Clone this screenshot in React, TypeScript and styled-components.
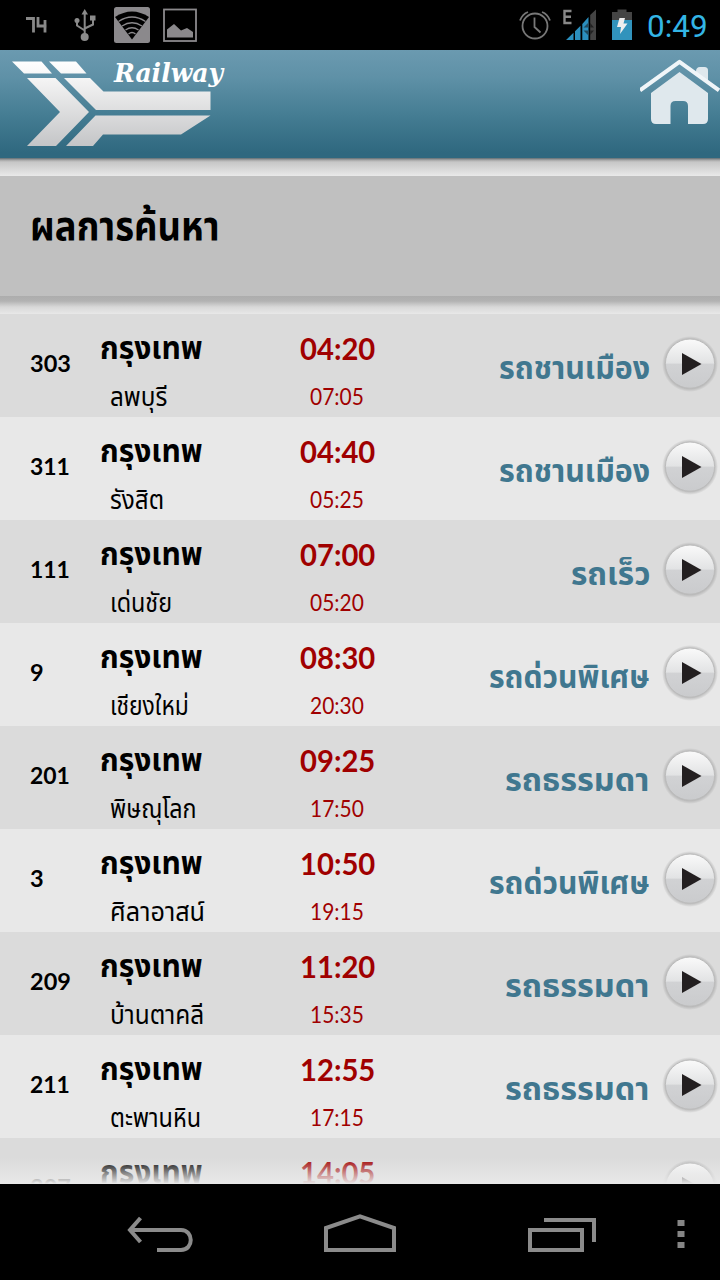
import React, { useLayoutEffect, useRef, useState } from "react";
import styled, { createGlobalStyle } from "styled-components";

const GlobalStyle = createGlobalStyle`
  * { box-sizing: border-box; }
  html, body { margin: 0; padding: 0; background: #000; }
`;

const LATIN = `Lato, "Noto Sans Thai", "Noto Sans", sans-serif`;
const THAI = `"Noto Sans Thai", "Noto Sans", "DejaVu Sans", sans-serif`;

const Screen = styled.div`
  display: flex;
  flex-direction: column;
  width: 720px;
  height: 1280px;
  overflow: hidden;
  background: #000;
  font-family: ${LATIN};
`;

const StatusBar = styled.div`
  display: flex;
  justify-content: space-between;
  flex: none;
  height: 50px;
  background: #000;
`;

const Clock = styled.div`
  width: 73px;
  font: 400 32px/52px Roboto, sans-serif;
  color: #33b5e5;
  white-space: nowrap;
`;

const StatusRight = styled.div`
  display: flex;
`;

const Header = styled.header`
  display: flex;
  justify-content: space-between;
  flex: none;
  height: 108px;
  background: linear-gradient(#6b9ab0, #5f91a7 25%, #457d93 60%, #2f687f 95%, #2f687f);
`;

const Brand = styled.div`
  display: flex;
  padding-left: 12px;
`;

const HeaderLip = styled.div`
  flex: none;
  height: 18px;
  background: linear-gradient(#5f6d73, #a5a5a5 2px, #c6c6c6 4px, #e9e9e9);
`;

const TitleBar = styled.div`
  flex: none;
  height: 120px;
  padding: 26px 0 0 30px;
  background: #c0c0c0;
`;

const TitleLip = styled.div`
  flex: none;
  height: 18px;
  background: linear-gradient(#adadad, #b2b2b2 5px, #d8d8d8 11px, #e8e8e8);
`;

const List = styled.div`
  position: relative;
  flex: none;
  height: 870px;
  overflow: hidden;
`;

const Fade = styled.div`
  position: absolute;
  left: 0;
  right: 0;
  bottom: 0;
  height: 26px;
  background: linear-gradient(rgba(232, 232, 232, 0), #e8e8e8);
`;

const Row = styled.div<{ $alt: boolean }>`
  display: flex;
  height: 103px;
  padding-left: 30px;
  background: ${(p) => (p.$alt ? "#e8e8e8" : "#dbdbdb")};
`;

const NumberCell = styled.div`
  width: 70px;
  padding-top: 34px;
`;

const StationCell = styled.div`
  width: 200px;
  padding-top: 11px;
`;

const TimeCell = styled.div`
  width: 120px;
  padding-top: 13px;
`;

const TypeCell = styled.div`
  display: flex;
  flex: 1;
  justify-content: flex-end;
  padding: 32px 10px 0 0;
`;

const PlayCell = styled.div`
  width: 60px;
  padding-top: 18px;
`;

const Second = styled.div`
  padding-left: 10px;
`;

const Label = styled.div<{
  $size: number;
  $line: number;
  $weight?: number;
  $color?: string;
  $thai?: boolean;
}>`
  font-family: ${(p) => (p.$thai ? THAI : LATIN)};
  font-size: ${(p) => p.$size}px;
  line-height: ${(p) => p.$line}px;
  height: ${(p) => p.$line}px;
  font-weight: ${(p) => p.$weight ?? 400};
  color: ${(p) => p.$color ?? "#000"};
  white-space: nowrap;
`;

const Stretch = styled.span`
  display: inline-block;
  transform-origin: 0 50%;
`;

const NavBar = styled.nav`
  display: flex;
  flex: none;
  height: 96px;
  background: #000;
`;

/** Keeps a run of text at a set width, whatever the advance widths of the font. */
function Fit({ width, children }: { width: number; children: string }) {
  const ref = useRef<HTMLSpanElement>(null);
  const [scale, setScale] = useState(1);
  useLayoutEffect(() => {
    const w = ref.current?.offsetWidth;
    if (w) setScale(width / w);
  }, [width, children]);
  return (
    <div style={{ width }}>
      <Stretch ref={ref} style={{ transform: `scaleX(${scale})` }}>
        {children}
      </Stretch>
    </div>
  );
}

type Train = {
  no: string;
  noW: number;
  to?: string;
  toW?: number;
  dep: string;
  arr?: string;
  type?: string;
  typeW?: number;
};

const TRAINS: Train[] = [
  { no: "303", noW: 41, to: "ลพบุรี", toW: 57, dep: "04:20", arr: "07:05", type: "รถชานเมือง", typeW: 151 },
  { no: "311", noW: 40, to: "รังสิต", toW: 54, dep: "04:40", arr: "05:25", type: "รถชานเมือง", typeW: 151 },
  { no: "111", noW: 40, to: "เด่นชัย", toW: 62, dep: "07:00", arr: "05:20", type: "รถเร็ว", typeW: 79 },
  { no: "9", noW: 14, to: "เชียงใหม่", toW: 79, dep: "08:30", arr: "20:30", type: "รถด่วนพิเศษ", typeW: 161 },
  { no: "201", noW: 40, to: "พิษณุโลก", toW: 87, dep: "09:25", arr: "17:50", type: "รถธรรมดา", typeW: 145 },
  { no: "3", noW: 14, to: "ศิลาอาสน์", toW: 95, dep: "10:50", arr: "19:15", type: "รถด่วนพิเศษ", typeW: 161 },
  { no: "209", noW: 41, to: "บ้านตาคลี", toW: 94, dep: "11:20", arr: "15:35", type: "รถธรรมดา", typeW: 145 },
  { no: "211", noW: 40, to: "ตะพานหิน", toW: 91, dep: "12:55", arr: "17:15", type: "รถธรรมดา", typeW: 145 },
  { no: "207", noW: 41, dep: "14:05" },
];

const PlayButton = () => (
  <svg width="60" height="64" viewBox="660 332 60 64" style={{ display: "block" }}>
    <defs>
      <linearGradient id="ball" x1="0" y1="0" x2="0" y2="1">
        <stop offset="0" stopColor="#fafafa" />
        <stop offset="0.49" stopColor="#e2e3e4" />
        <stop offset="0.51" stopColor="#d1d2d4" />
        <stop offset="1" stopColor="#cacbcd" />
      </linearGradient>
      <radialGradient id="halo">
        <stop offset="0.86" stopColor="#999" stopOpacity="0.6" />
        <stop offset="1" stopColor="#999" stopOpacity="0" />
      </radialGradient>
    </defs>
    <circle cx="690" cy="364" r="28" fill="url(#halo)" />
    <circle cx="690" cy="363.6" r="24.6" fill="url(#ball)" stroke="#bcbcbc" strokeWidth="1" />
    <path d="M682 353 L701.5 364 L682 375Z" fill="#231f20" />
  </svg>
);

function TrainRow({ train, alt }: { train: Train; alt: boolean }) {
  return (
    <Row $alt={alt}>
      <NumberCell>
        <Label $size={23.5} $line={30} $weight={700}><Fit width={train.noW}>{train.no}</Fit></Label>
      </NumberCell>
      <StationCell>
        <Label $size={32} $line={48} $weight={700} $thai><Fit width={103}>กรุงเทพ</Fit></Label>
        {train.to && (
          <Second>
            <Label $size={26} $line={50} $thai><Fit width={train.toW ?? 0}>{train.to}</Fit></Label>
          </Second>
        )}
      </StationCell>
      <TimeCell>
        <Label $size={30} $line={42} $weight={700} $color="#a00000"><Fit width={75}>{train.dep}</Fit></Label>
        {train.arr && (
          <Second>
            <Label $size={22.5} $line={55} $color="#a00000"><Fit width={54}>{train.arr}</Fit></Label>
          </Second>
        )}
      </TimeCell>
      <TypeCell>
        {train.type && (
          <Label $size={32} $line={46} $weight={700} $color="#40778f" $thai>
            <Fit width={train.typeW ?? 0}>{train.type}</Fit>
          </Label>
        )}
      </TypeCell>
      <PlayCell><PlayButton /></PlayCell>
    </Row>
  );
}

const Notifications = () => (
  <svg width="220" height="50" viewBox="0 0 220 50">
    <g fill="none" stroke="#888" strokeWidth="2.8">
      <path d="M26 18.5H33.5V32.5M38 17V26H46.5M45 20V32.5" />
      <path d="M84.7 12V37M77 21V25.5L84.7 30.5M93 19V24.5L84.7 28.5" strokeWidth="2" />
      <rect x="164" y="9.5" width="32" height="31.5" strokeWidth="1.8" stroke="#8b898c" />
    </g>
    <g fill="#8b8b8b">
      <path d="M81.5 14.5L84.7 9L88 14.5Z" />
      <circle cx="77" cy="20.5" r="2.5" />
      <rect x="90" y="15.5" width="5.5" height="5" />
      <circle cx="84.7" cy="37" r="4" />
      <rect x="114" y="7" width="36" height="36" rx="2.5" fill="#8b898c" />
      <path d="M167 37V29.5L174 24L181 30.5L187 28L193 32V37.5H167Z" fill="#8b898c" />
    </g>
    <path d="M115 17Q132 6 149 17L132 39.5Z" fill="#000" />
    <g fill="none" stroke="#8b898c" strokeWidth="1.3">
      <path d="M118.5 21.5Q132 12.5 145.5 21.5" />
      <path d="M122 26Q132 19.5 142 26" />
      <path d="M125.5 30Q132 25.5 138.5 30" />
      <path d="M128.5 34Q132 31 135.5 34" />
    </g>
  </svg>
);

const SystemStatus = () => (
  <svg width="147" height="50" viewBox="500 0 147 50">
    <g fill="none" stroke="#777" strokeWidth="1.8">
      <circle cx="535" cy="26" r="12.5" />
      <path d="M534.5 17.5V27L540.5 32.5" />
      <path d="M520 20.5Q522.5 14 528 12M550 20.5Q547.5 14 542 12" />
      <path d="M571.5 11H564.5V23H571.5M564.5 16.8H571" stroke="#888" strokeWidth="2.4" />
    </g>
    <path d="M566 40L573.5 32.7V40ZM575 31.2L580.5 25.7V40H575ZM582.3 24L588.5 17V40H582.3Z" fill="#2b8fbe" />
    <path d="M590.2 15L596 9.5V40H590.2Z" fill="#444" />
    <path d="M589 22L583.5 27.5H589ZM589 36L583.5 30.5H589Z" fill="#204b60" />
    <path d="M590.2 23L594 27.5H590.2ZM590.2 35L594 30.5H590.2Z" fill="#222" />
    <path d="M612 12H617.5V9.5H626.5V12H632V20H612Z" fill="#444" />
    <rect x="612" y="20" width="20" height="20" fill="#3193bc" />
    <path d="M619.5 18H625L623.5 23.5H627.5L620 34L621 27H617Z" fill="#eee" />
  </svg>
);

const RailwayLogo = () => (
  <svg width="218" height="108" viewBox="12 50 218 108">
    <defs>
      <linearGradient id="metal" gradientUnits="userSpaceOnUse" x1="0" y1="61" x2="0" y2="146">
        <stop offset="0" stopColor="#fff" />
        <stop offset="0.25" stopColor="#f2f2f2" />
        <stop offset="1" stopColor="#c4c5c7" />
      </linearGradient>
    </defs>
    <g fill="url(#metal)">
      <path d="M12 61.5H41.5L52 73.5H24Z" />
      <path d="M49 61.5H76L86.5 73.5H61Z" />
      <path d="M27 78H55.5L89 112L56 146H27L60 112Z" />
      <path d="M64 78H90L103.5 91.5H210.5V110H96Z" />
      <path d="M95.5 115.5H210.5L181 134.5H103L93 146H66Z" />
    </g>
    <text
      x="114"
      y="82"
      textLength="109"
      lengthAdjust="spacingAndGlyphs"
      fill="#fff"
      fontFamily="'DejaVu Serif', serif"
      fontStyle="italic"
      fontWeight="700"
      fontSize="26.5"
    >
      Railway
    </text>
  </svg>
);

const HomeIcon = () => (
  <svg width="80" height="108" viewBox="640 50 80 108">
    <path d="M696 71.5Q696 67 700 67H704.5Q708 67 708 70.5V84L696 75Z" fill="#dfe8ed" />
    <path d="M640 90.3L679.5 61.8L719 90.3" fill="none" stroke="#f0f5f8" strokeWidth="4" strokeLinejoin="round" />
    <path
      d="M651 93L679.5 72L708 93V119Q708 124 703 124H688V106Q688 101 683 101H675.5Q670.5 101 670.5 106V124H656Q651 124 651 119Z"
      fill="#dfe8ed"
    />
  </svg>
);

const NavIcons = () => (
  <svg width="720" height="96" viewBox="0 1184 720 96">
    <g fill="none" stroke="#8b8b8b" strokeWidth="4">
      <path d="M157 1250H181C194 1250 194 1230 181 1230H130" />
      <path d="M140.5 1218L130 1230L140.5 1242" />
      <path d="M326 1250V1228L360 1216.3L394 1228V1250Z" />
      <rect x="530" y="1230" width="52" height="20" />
      <path d="M544 1220H594V1242" />
    </g>
    <g fill="#858585">
      <rect x="677.5" y="1220" width="7" height="6" />
      <rect x="677.5" y="1231" width="7" height="6" />
      <rect x="677.5" y="1242" width="7" height="6" />
    </g>
  </svg>
);

export default function App() {
  return (
    <Screen>
      <GlobalStyle />
      <StatusBar>
        <Notifications />
        <StatusRight>
          <SystemStatus />
          <Clock><Fit width={61}>0:49</Fit></Clock>
        </StatusRight>
      </StatusBar>
      <Header>
        <Brand><RailwayLogo /></Brand>
        <HomeIcon />
      </Header>
      <HeaderLip />
      <TitleBar>
        <Label $size={41} $line={51} $weight={700} $thai><Fit width={190}>ผลการค้นหา</Fit></Label>
      </TitleBar>
      <TitleLip />
      <List>
        {TRAINS.map((t, i) => (
          <TrainRow key={t.no} train={t} alt={i % 2 === 1} />
        ))}
        <Fade />
      </List>
      <NavBar><NavIcons /></NavBar>
    </Screen>
  );
}
